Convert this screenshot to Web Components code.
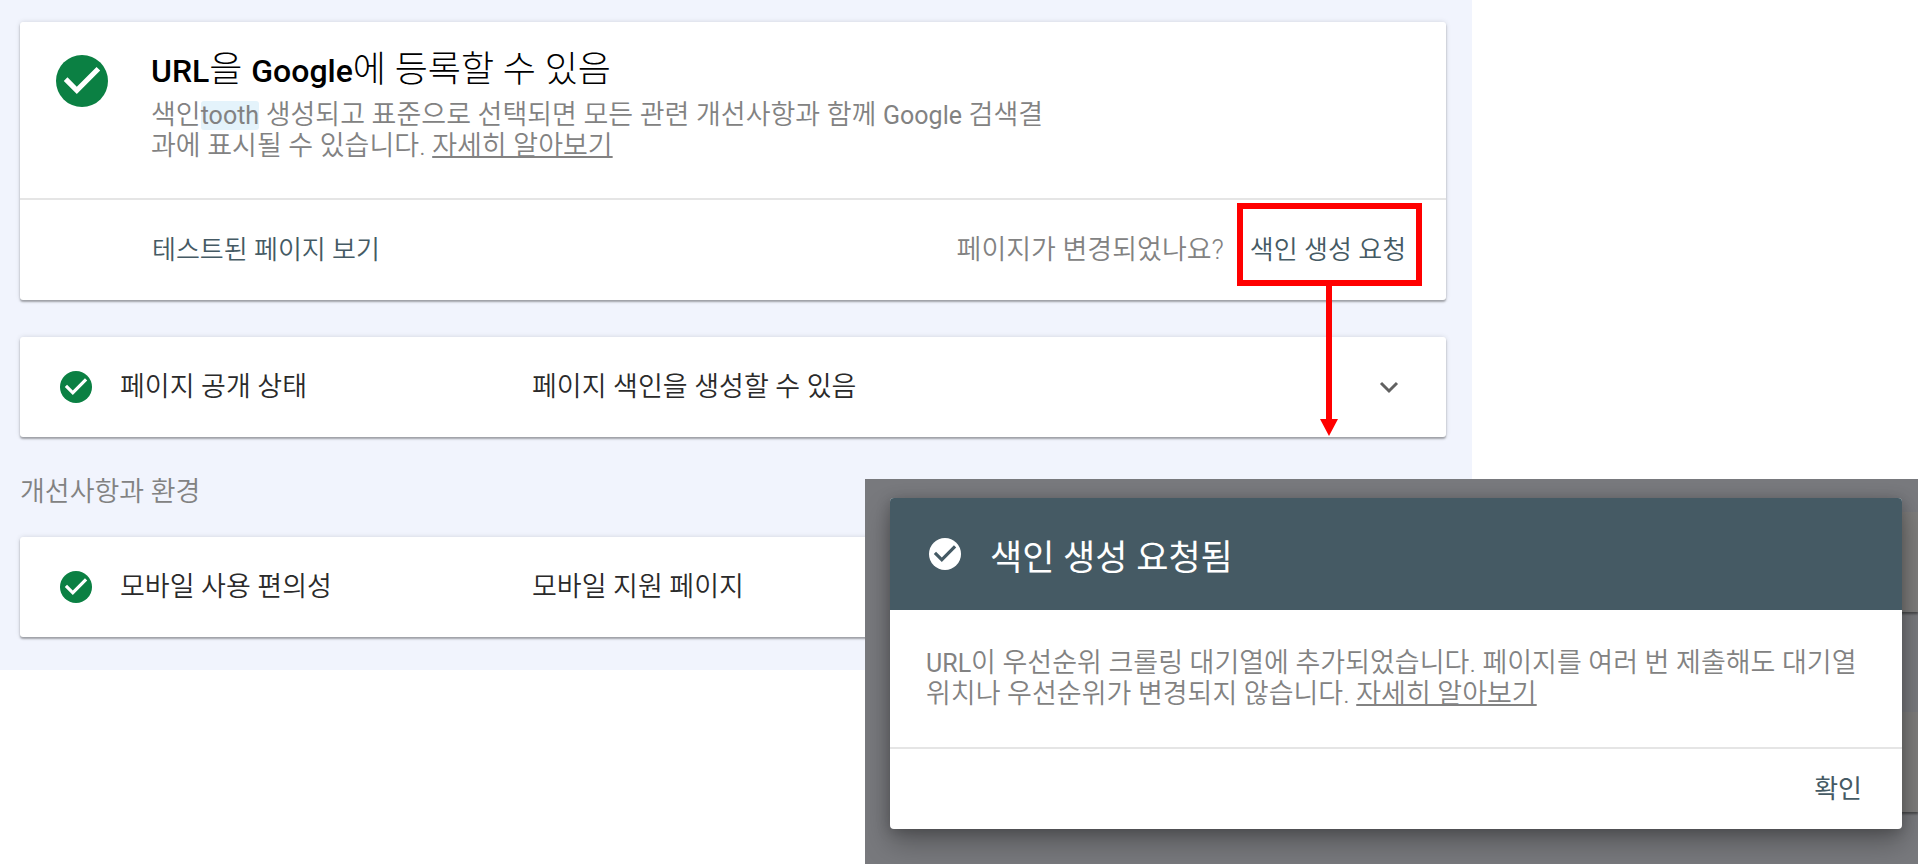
<!DOCTYPE html>
<html lang="ko">
<head>
<meta charset="utf-8">
<meta name="viewport" content="width=device-width, initial-scale=1">
<title>URL 검사</title>
<style>
  body { margin: 0; background: #fff; font-family: Roboto, "Noto Sans CJK KR", sans-serif; font-size: 27px; font-weight: 350; line-height: 31px; color: #2a2a2a; }
</style>
</head>
<body>
<inspection-page></inspection-page>

<template id="t-page">
  <style>
    :host { display: block; position: relative; min-height: 100vh; overflow: hidden; --muted: #828282; }
    main { box-sizing: border-box; width: 76.75%; padding: 22px 26px 33px 20px; background: #f1f4fd; }
    h2 { margin: 0; padding: 40px 0 29px; font: inherit; color: var(--muted); }
    .gap { display: block; height: 37px; }
    a { color: inherit; text-decoration: underline; text-decoration-thickness: 2px; text-underline-offset: 1px; }
    mark { background: #e4f3fb; color: inherit; border-radius: 3px; font-size: 25px; font-weight: 400; line-height: 0; }
    .latin { font-size: 25px; font-weight: 400; line-height: 0; }
    .title-latin { font-size: 32px; font-weight: 500; line-height: 0; }
    dialog-layer { position: absolute; top: 479px; left: 45.1%; right: 0; bottom: 0; }
  </style>
  <main>
    <verdict-card>
      <span slot="title"><span class="title-latin">URL</span>을 <span class="title-latin">Google</span>에 등록할 수 있음</span>
      <span>색인<mark>tooth</mark> 생성되고 표준으로 선택되면 모든 관련 개선사항과 함께 <span class="latin">Google</span> 검색결과에 표시될 수 있습니다. <a href="#learn">자세히 알아보기</a></span>
    </verdict-card>
    <span class="gap"></span>
    <status-row expandable>
      <span slot="name">페이지 공개 상태</span>
      <span>페이지 색인을 생성할 수 있음</span>
    </status-row>
    <h2>개선사항과 환경</h2>
    <status-row>
      <span slot="name">모바일 사용 편의성</span>
      <span>모바일 지원 페이지</span>
    </status-row>
  </main>
  <dialog-layer>
    <span slot="title">색인 생성 요청됨</span>
    <span><span class="latin">URL</span>이 우선순위 크롤링 대기열에 추가되었습니다. 페이지를 여러 번 제출해도 대기열 위치나 우선순위가 변경되지 않습니다. <a href="#learn">자세히 알아보기</a></span>
  </dialog-layer>
</template>

<template id="t-check">
  <style>
    :host { display: block; flex: none; color: #0b8043; width: 32px; height: 32px; }
    svg { display: block; width: 100%; height: 100%; }
  </style>
  <svg viewBox="2 2 20 20" aria-hidden="true">
    <circle cx="12" cy="12" r="10" fill="currentColor"/>
    <path d="M10 17l-5-5 1.41-1.41L10 14.17l7.59-7.59L19 8z" fill="var(--tick, #fff)"/>
  </svg>
</template>

<template id="t-verdict">
  <style>
    :host { display: block; background: #fff; border-radius: 3px; box-shadow: 0 2px 2px rgba(0,0,0,.3), 0 0 5px rgba(0,0,0,.13); }
    .top { display: flex; gap: 43px; padding: 33px 36px 36px; }
    check-icon { width: 52px; height: 52px; }
    h1 { margin: 0 0 15px; font: inherit; font-size: 36px; font-weight: 300; line-height: 30px; color: #000; }
    p { margin: 0; max-width: 900px; color: var(--muted); }
    .actions { display: flex; align-items: center; justify-content: space-between; border-top: 2px solid #e5e5e5; height: 100px; padding: 0 40px 0 132px; }
    .right { display: flex; align-items: center; gap: 26px; color: var(--muted); }
    button { display: block; border: 0; padding: 0; background: none; font: inherit; font-size: 26px; color: #455a64; cursor: pointer; }
    .target { position: relative; }
    .frame { position: absolute; inset: -32px -16px -20px -13px; border: 6px solid #f00; pointer-events: none; }
    .frame svg { position: absolute; left: 50%; top: 100%; margin-left: -9px; width: 18px; height: 156px; z-index: 1; }
  </style>
  <div class="top">
    <check-icon></check-icon>
    <div>
      <h1><slot name="title"></slot></h1>
      <p><slot></slot></p>
    </div>
  </div>
  <div class="actions">
    <button type="button">테스트된 페이지 보기</button>
    <div class="right">
      <span>페이지가 변경되었나요?</span>
      <div class="target">
        <button type="button">색인 생성 요청</button>
        <div class="frame"><svg viewBox="0 0 18 156" aria-hidden="true"><path d="M6 0h6v139h6l-9 17-9-17h6z" fill="#f00"/></svg></div>
      </div>
    </div>
  </div>
</template>

<template id="t-row">
  <style>
    :host { display: grid; grid-template-columns: 32px 384px 1fr auto; column-gap: 28px; align-items: center; height: 100px; padding: 0 45px 0 40px; background: #fff; border-radius: 3px; box-shadow: 0 2px 2px rgba(0,0,0,.3), 0 0 5px rgba(0,0,0,.13); }
    button { display: none; border: 0; padding: 0; background: none; width: 24px; height: 24px; cursor: pointer; }
    :host([expandable]) button { display: block; }
    svg { display: block; }
  </style>
  <check-icon></check-icon>
  <slot name="name"></slot>
  <slot></slot>
  <button type="button" aria-label="펼치기"><svg width="24" height="24" viewBox="0 0 24 24"><path d="M4 8l8 8 8-8" fill="none" stroke="#616161" stroke-width="3"/></svg></button>
</template>

<template id="t-dialog">
  <style>
    :host { display: block; box-sizing: border-box; padding: 19px 16px 33px 25px; background: #78797d; overflow: hidden; }
    .ghost { position: absolute; right: 0; width: 60px; height: 100px; background: #7d7c7b; box-shadow: 0 2px 2px rgba(0,0,0,.4); }
    .one { top: 33px; }
    .two { top: 233px; }
    section { position: relative; background: #fff; border-radius: 4px; box-shadow: 0 14px 28px rgba(0,0,0,.28), 0 2px 14px rgba(0,0,0,.22); }
    header { display: flex; align-items: center; gap: 29px; height: 112px; padding: 0 39px; background: #455a64; border-radius: 4px 4px 0 0; color: #fff; }
    check-icon { color: #fff; --tick: #455a64; }
    h2 { margin: 0; padding-top: 10px; font: inherit; font-size: 35px; font-weight: 400; line-height: 40px; }
    p { margin: 0; padding: 38px 36px 37px; color: var(--muted); }
    footer { display: flex; justify-content: flex-end; align-items: center; height: 80px; padding: 0 40px; border-top: 2px solid #e5e5e5; }
    button { border: 0; padding: 0; background: none; font: inherit; font-size: 26px; font-weight: 400; color: #455a64; cursor: pointer; }
  </style>
  <div class="ghost one"></div>
  <div class="ghost two"></div>
  <section role="dialog" aria-labelledby="dt">
    <header><check-icon></check-icon><h2 id="dt"><slot name="title"></slot></h2></header>
    <p><slot></slot></p>
    <footer><button type="button">확인</button></footer>
  </section>
</template>

<script>
  const define = (name, id) => customElements.define(name, class extends HTMLElement {
    constructor() {
      super();
      this.attachShadow({ mode: "open" }).append(document.getElementById(id).content.cloneNode(true));
    }
  });
  define("check-icon", "t-check");
  define("verdict-card", "t-verdict");
  define("status-row", "t-row");
  define("dialog-layer", "t-dialog");
  define("inspection-page", "t-page");
</script>
</body>
</html>
